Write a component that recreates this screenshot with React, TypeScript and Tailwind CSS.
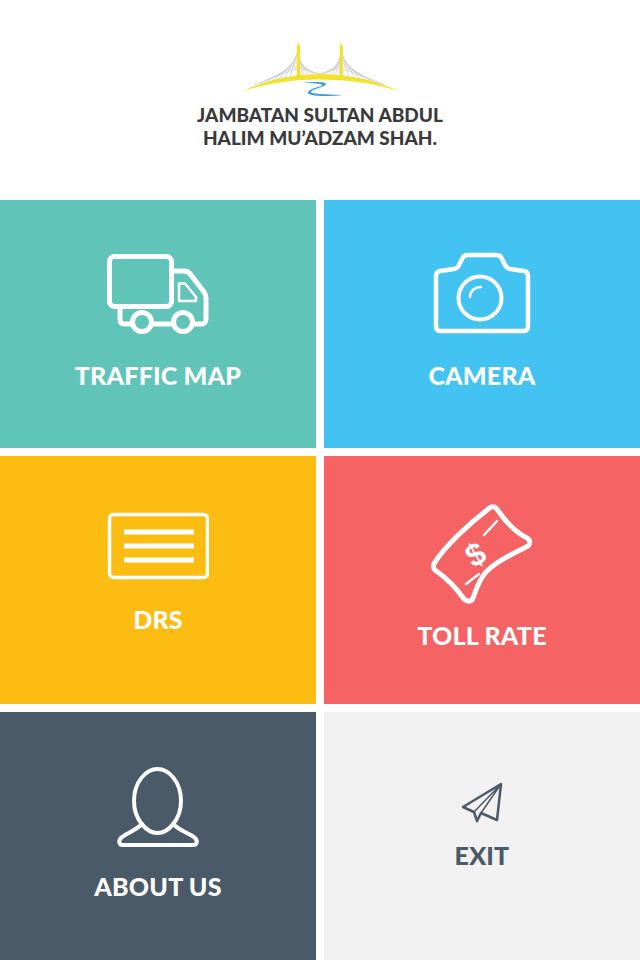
import React from 'react';

const labelFont = "font-['Lato','Inter',sans-serif] font-black";

const BridgeLogo = () => (
  <svg width="160" height="60" viewBox="240 40 160 60" fill="none">
    {/* cables */}
    <g stroke="#c9c9c9" strokeWidth="0.7">
      {[0, 1, 2, 3, 4, 5, 6].map(i => (
        <React.Fragment key={i}>
          <path d={`M298 ${50 + i * 3} L${296 - i * 6 - 6} ${77 + i * 1.3}`} />
          <path d={`M298 ${50 + i * 3} L${300 + i * 3.4} 74`} />
          <path d={`M341 ${50 + i * 3} L${339 - i * 3.4} 74`} />
          <path d={`M341 ${50 + i * 3} L${343 + i * 6 + 6} ${77 + i * 1.3}`} />
        </React.Fragment>
      ))}
    </g>
    <path d="M296.8 78V47L298.5 42L300.2 47V78Z" fill="#f0e32a" />
    <path d="M339.8 78V47L341 42L342.8 47V78Z" fill="#f0e32a" />
    <path d="M243 91C268 79 296 74 320 74C344 74 372 79 399 91C372 83 346 79.5 320 79.5C294 79.5 268 83 243 91Z" fill="#f0e32a" />
    <path d="M303 83C315 81 326 82 326 84C326 87 311 89 311 92C311 94 328 94.5 343 95C325 97 306 96 308 92C310 88 322 87 322 85C322 83.5 312 83 303 83Z" fill="#2f9fe0" />
  </svg>
);

const TruckIcon = () => (
  <svg width="104" height="84" viewBox="108 252 104 84" fill="none" stroke="#fff" strokeWidth="5" strokeLinejoin="round" strokeLinecap="round">
    <rect x="111.5" y="256.5" width="62" height="50" rx="5" />
    <path d="M176 271H186C189 271 191 272 193 275L206 292C207.500 294 208 295 208 298V319C208 322 206 324 204 324H197" />
    <path d="M122 308V320C122 323 124 324 127 324H133" />
    <path d="M155 324H174" />
    <circle cx="144" cy="322" r="9.500" />
    <circle cx="185" cy="322" r="9.500" />
    <path d="M181 283.500V301H198V297L187 283.500Z" strokeWidth="2.500" />
  </svg>
);

const CameraIcon = () => (
  <svg width="100" height="84" viewBox="430 251 100 84" fill="none" stroke="#fff" strokeLinejoin="round" strokeLinecap="round">
    <path strokeWidth="4.500" d="M438 271L452 269C455 268.500 456 267 457 265L460 259C461 256 463 255 466 255H494C497 255 499 256 500 259L503 265C504 267 505 268.500 508 269L522 271C525 271.500 526 273 526 276V326C526 329 525 331 522 331H438C435 331 434 329 434 326V276C434 273 435 271.500 438 271Z" />
    <circle cx="478" cy="298" r="21.500" strokeWidth="4" />
    <path strokeWidth="2.500" d="M468 297C468 291 473 287 479 287" />
  </svg>
);

const DrsIcon = () => (
  <svg width="102" height="68" viewBox="108 512 102 68" fill="none" stroke="#fff">
    <rect x="110.500" y="514.500" width="98" height="63" rx="4" strokeWidth="3.500" />
    <path d="M125 532H195M125 546H195M125 560H195" strokeWidth="5" />
  </svg>
);

const MoneyIcon = () => (
  <svg width="104" height="102" viewBox="429 503 104 102" fill="none" stroke="#fff" strokeLinecap="round" strokeLinejoin="round">
    <path strokeWidth="5" d="M488.500 508C491 506 494 506.500 496 509C504 521 514 532 526 538C529.500 540 529.500 543.500 527 546C515 552 497 560 486 571C478 579 475 590 472 598C470.500 602 466 602 463 599C454 586 444 577 434 570C432 568 432 565 434 562C445 545 469 523 488.500 508Z" />
    <path strokeWidth="2.500" d="M483 535L496 521M465 584L478 574" />
    <text x="0" y="0" transform="translate(480 564) rotate(-30)" textAnchor="middle" fill="#fff" stroke="none" fontFamily="'Liberation Sans', sans-serif" fontWeight="700" fontSize="32">$</text>
  </svg>
);

const PersonIcon = () => (
  <svg width="84" height="82" viewBox="117 766 84 82" fill="none" stroke="#fff" strokeWidth="4" strokeLinejoin="round" strokeLinecap="round">
    <path d="M158.500 769C170 769 182 782 182 801C182 820 169 833 158.500 833C148 833 135 820 135 801C135 782 147 769 158.500 769Z" />
    <path d="M143 824C136 831 126 834 122 838C119 841 120 845 124 845H194C198 845 199 841 196 838C192 834 181 831 174 824" />
  </svg>
);

const PlaneIcon = () => (
  <svg width="44" height="44" viewBox="458 781 44 44" fill="none" stroke="#4a5a68" strokeWidth="2.500" strokeLinejoin="round" strokeLinecap="round">
    <path d="M499 784L461 807L472 812L475 821L479 813L495 820Z" />
    <path d="M499 784L472 812M499 784L479 813" strokeWidth="1.500" />
  </svg>
);

interface TileProps {
  label: string;
  icon: React.ReactNode;
  className: string;
  labelClassName: string;
}

const Tile: React.FC<TileProps> = ({ label, icon, className, labelClassName }) => (
  <div className={`flex h-[248px] flex-col items-center ${className}`}>
    {icon}
    <span className={`${labelFont} text-[25px] leading-none tracking-[0.2px] ${labelClassName}`}>{label}</span>
  </div>
);

export default function App() {
  return (
    <div className="h-[960px] w-[640px] overflow-hidden bg-white">
      <div className="flex h-[200px] flex-col items-center pt-[40px]">
        <BridgeLogo />
        <div className={`${labelFont} mt-[3px] text-center text-[19px] leading-[23px] text-[#3a3a3c]`}>
          <div>JAMBATAN SULTAN ABDUL</div>
          <div>HALIM MU’ADZAM SHAH.</div>
        </div>
      </div>
      <div className="grid grid-cols-[316px_316px] gap-2">
        <Tile label="TRAFFIC MAP" icon={<TruckIcon />} className="bg-[#61c4b8] pt-[52px] text-white" labelClassName="mt-[27px]" />
        <Tile label="CAMERA" icon={<CameraIcon />} className="bg-[#43c3f2] pt-[51px] text-white" labelClassName="mt-[28px]" />
        <Tile label="DRS" icon={<DrsIcon />} className="bg-[#fdbc11] pt-[56px] text-white" labelClassName="mt-[27px]" />
        <Tile label="TOLL RATE" icon={<MoneyIcon />} className="bg-[#f56364] pt-[47px] text-white" labelClassName="mt-[18px]" />
        <Tile label="ABOUT US" icon={<PersonIcon />} className="bg-[#4a5a68] pt-[54px] text-white" labelClassName="mt-[26px]" />
        <Tile label="EXIT" icon={<PlaneIcon />} className="bg-[#f1f1f1] pt-[69px] text-[#4a5a68]" labelClassName="mt-[18px]" />
      </div>
    </div>
  );
}
